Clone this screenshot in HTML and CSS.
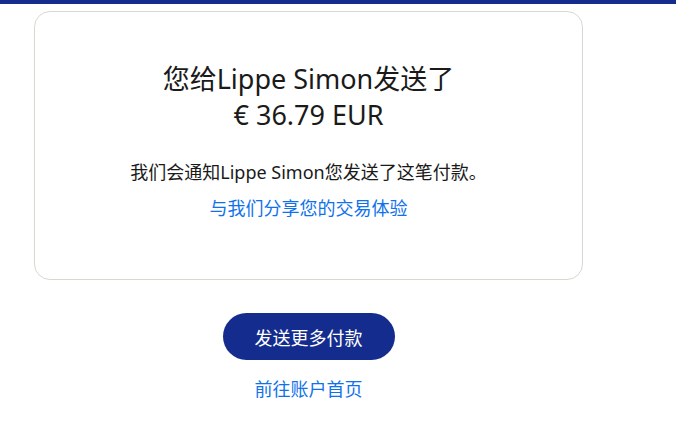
FILE: index.html
```html
<!DOCTYPE html>
<html lang="zh-CN">
<head>
<meta charset="utf-8">
<link rel="stylesheet" href="styles.css">
</head>
<body>
<div class="topbar"></div>
<main class="page">
  <section class="card">
    <h1 class="title"><span class="line">您给Lippe Simon发送了</span><span class="line">€ 36.79 EUR</span></h1>
    <p class="note">我们会通知Lippe Simon您发送了这笔付款。</p>
    <a class="link share" href="#">与我们分享您的交易体验</a>
  </section>
  <div class="actions">
    <button class="btn">发送更多付款</button>
    <a class="link home" href="#">前往账户首页</a>
  </div>
</main>
</body>
</html>
```
FILE: styles.css
```css
html, body { margin: 0; padding: 0; background: #fff; }
body {
  font-family: "Noto Sans", "Noto Sans CJK SC", sans-serif;
  color: #1a1a1a;
}
.topbar { height: 4px; background: #142c8e; }
.page { padding: 7px 0 0 34px; width: 549px; }
.card {
  box-sizing: border-box;
  width: 549px;
  height: 269px;
  border: 1px solid #d9d8cf;
  border-radius: 16px;
  display: flex;
  flex-direction: column;
  align-items: center;
  padding-top: 49px;
}
.title {
  margin: 0;
  font-weight: 400;
  font-size: 27px;
  text-align: center;
  display: flex;
  flex-direction: column;
  align-items: center;
}
.line { display: block; height: 36px; line-height: 36px; }
.note {
  margin: 26px 0 0;
  font-size: 18px;
  line-height: 26px;
}
.link {
  color: #1072eb;
  text-decoration: none;
  font-size: 18px;
  line-height: 26px;
}
.share { margin-top: 10px; }
.actions {
  display: flex;
  flex-direction: column;
  align-items: center;
  padding-top: 33px;
}
.btn {
  font-family: inherit;
  font-size: 18px;
  color: #fff;
  background: #142c8e;
  border: none;
  border-radius: 24px;
  width: 172px;
  height: 47px;
  padding: 0;
}
.home { margin-top: 16px; }
```
